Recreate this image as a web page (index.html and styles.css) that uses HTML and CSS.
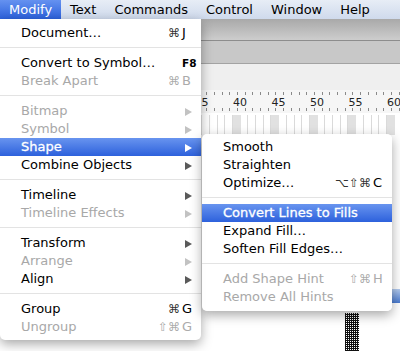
FILE: index.html
```html
<!DOCTYPE html>
<html lang="en">
<head>
    <meta charset="UTF-8">
    <meta name="viewport" content="width=device-width, initial-scale=1.0">
    <title>Modify Menu</title>
    <link rel="stylesheet" href="styles.css">
</head>
<body>

    <div class="menubar">
        <span class="menubar-item active">Modify</span>
        <span class="menubar-item">Text</span>
        <span class="menubar-item">Commands</span>
        <span class="menubar-item">Control</span>
        <span class="menubar-item">Window</span>
        <span class="menubar-item">Help</span>
    </div>

    <div class="window">
        <div class="toolbar"></div>
        <div class="tabbar"></div>
        <div class="panel"></div>
        <div class="ruler">
            <div class="ruler-nums">
                <span>35</span><span>40</span><span>45</span><span>50</span><span>55</span><span>60</span>
            </div>
        </div>
        <div class="frames"></div>
        <div class="stage">
            <div class="layer-bar"></div>
            <div class="dither"></div>
        </div>
    </div>

    <!-- Modify menu -->
    <div class="menu main-menu">
        <div class="item"><span class="label">Document…</span><span class="mods">⌘</span><span class="key">J</span></div>
        <div class="separator"></div>
        <div class="item"><span class="label">Convert to Symbol…</span><span class="mods"></span><span class="key fkey">F8</span></div>
        <div class="item disabled"><span class="label">Break Apart</span><span class="mods">⌘</span><span class="key">B</span></div>
        <div class="separator"></div>
        <div class="item disabled"><span class="label">Bitmap</span><span class="key"><span class="arrow"></span></span></div>
        <div class="item disabled"><span class="label">Symbol</span><span class="key"><span class="arrow"></span></span></div>
        <div class="item selected"><span class="label">Shape</span><span class="key"><span class="arrow"></span></span></div>
        <div class="item"><span class="label">Combine Objects</span><span class="key"><span class="arrow"></span></span></div>
        <div class="separator"></div>
        <div class="item"><span class="label">Timeline</span><span class="key"><span class="arrow"></span></span></div>
        <div class="item disabled"><span class="label">Timeline Effects</span><span class="key"><span class="arrow"></span></span></div>
        <div class="separator"></div>
        <div class="item"><span class="label">Transform</span><span class="key"><span class="arrow"></span></span></div>
        <div class="item disabled"><span class="label">Arrange</span><span class="key"><span class="arrow"></span></span></div>
        <div class="item"><span class="label">Align</span><span class="key"><span class="arrow"></span></span></div>
        <div class="separator"></div>
        <div class="item"><span class="label">Group</span><span class="mods">⌘</span><span class="key">G</span></div>
        <div class="item disabled"><span class="label">Ungroup</span><span class="mods">⇧⌘</span><span class="key">G</span></div>
    </div>

    <!-- Shape submenu -->
    <div class="menu sub-menu">
        <div class="item"><span class="label">Smooth</span></div>
        <div class="item"><span class="label">Straighten</span></div>
        <div class="item"><span class="label">Optimize…</span><span class="mods">⌥⇧⌘</span><span class="key">C</span></div>
        <div class="separator"></div>
        <div class="item selected"><span class="label">Convert Lines to Fills</span></div>
        <div class="item"><span class="label">Expand Fill…</span></div>
        <div class="item"><span class="label">Soften Fill Edges…</span></div>
        <div class="separator"></div>
        <div class="item disabled"><span class="label">Add Shape Hint</span><span class="mods">⇧⌘</span><span class="key">H</span></div>
        <div class="item disabled"><span class="label">Remove All Hints</span></div>
    </div>

</body>
</html>
```

FILE: styles.css
```css
body {
    margin: 0;
    width: 400px;
    height: 351px;
    overflow: hidden;
    position: relative;
    display: flex;
    flex-direction: column;
    font-family: "DejaVu Sans", sans-serif;
    font-size: 13px;
    background-color: #fff;
}

/* top menu bar */
.menubar {
    display: flex;
    flex: 0 0 19px;
    line-height: 19px;
    background: linear-gradient(#e7edf6, #cfdaec);
    color: #000;
}
.menubar-item {
    padding: 0 9px;
    white-space: nowrap;
}
.menubar-item.active {
    background: linear-gradient(#6592f0, #2c61dc);
    color: #fff;
}

/* application window behind the menus */
.window {
    flex: 1;
    display: flex;
    flex-direction: column;
    min-height: 0;
}
.toolbar {
    height: 21px;
    background: linear-gradient(#a9a9a9, #cdcdcd);
    border-bottom: 1px solid #8d8d8d;
}
.tabbar {
    height: 22px;
    background-color: #c8c8c8;
    border-bottom: 1px solid #a3a3a3;
}
.panel {
    height: 26px;
    background-color: #efefef;
}
.ruler {
    height: 23px;
    overflow: hidden;
    background-color: #f6f6f6;
    background-image:
        repeating-linear-gradient(90deg, #8a8a8a 0 1px, transparent 1px 7.7px),
        repeating-linear-gradient(90deg, #8a8a8a 0 1px, transparent 1px 7.7px);
    background-size: 100% 3px, 100% 3px;
    background-repeat: no-repeat;
    background-position: 6px 2px, 6px 18px;
}
.ruler-nums {
    display: flex;
    height: 100%;
    align-items: center;
    padding-left: 194.5px;
    padding-top: 1px;
    box-sizing: border-box;
    font-size: 11px;
    color: #222;
}
.ruler-nums span {
    flex: 0 0 38.5px;
}
.frames {
    height: 20px;
    border-top: 2px solid #fff;
    background-color: #fff;
    background-image:
        repeating-linear-gradient(90deg, #e1e1e1 0 7.7px, transparent 7.7px 38.5px),
        repeating-linear-gradient(90deg, #dadada 0 1px, transparent 1px 7.7px);
    background-position: 2px 0, 1px 0;
}
.stage {
    flex: 1;
    position: relative;
    background-color: #fff;
}
.layer-bar {
    position: absolute;
    right: 0;
    top: 154px;
    width: 8px;
    height: 14px;
    background: linear-gradient(#b4cbee, #4a7bd0);
}
.dither {
    position: absolute;
    left: 345px;
    top: 178px;
    width: 14px;
    bottom: 0;
    background-image: conic-gradient(#fff 25%, #111 0);
    background-size: 2px 2px;
}

/* menus */
.menu {
    position: absolute;
    background-color: #fff;
    box-shadow: 0 4px 12px rgba(0, 0, 0, 0.35);
}
.main-menu {
    top: 19px;
    left: 0;
    width: 201px;
    padding: 5px 0 4px;
    border-radius: 0 0 5px 5px;
}
.sub-menu {
    top: 134px;
    left: 202px;
    width: 190px;
    padding: 4px 0 5px;
    border-radius: 5px;
    background-color: rgba(255, 255, 255, 0.94);
}
.item {
    display: flex;
    height: 18px;
    line-height: 18px;
    padding-left: 21px;
    color: #000;
    white-space: nowrap;
}
.item.disabled {
    color: #a8a8a8;
}
.item.selected {
    background: linear-gradient(#6894ef, #2d61dc);
    color: #fff;
    -webkit-text-stroke: 0.3px #fff;
}
.label {
    flex: 1;
}
.mods {
    font-size: 12px;
    text-align: right;
    color: #333;
}
.item.disabled .mods,
.item.disabled .key {
    color: #ababab;
}
.key {
    width: 21px;
    padding-left: 2px;
    box-sizing: border-box;
}
.fkey {
    font-size: 10.5px;
    font-weight: bold;
}
.arrow {
    display: inline-block;
    margin-left: 3px;
    border-left: 7px solid #5a5a5a;
    border-top: 4px solid transparent;
    border-bottom: 4px solid transparent;
    vertical-align: middle;
}
.item.disabled .arrow {
    border-left-color: #c2c2c2;
}
.item.selected .arrow {
    border-left-color: #fff;
}
.separator {
    height: 1px;
    margin: 5px 0 6px;
    background-color: #e3e3e3;
}
```
